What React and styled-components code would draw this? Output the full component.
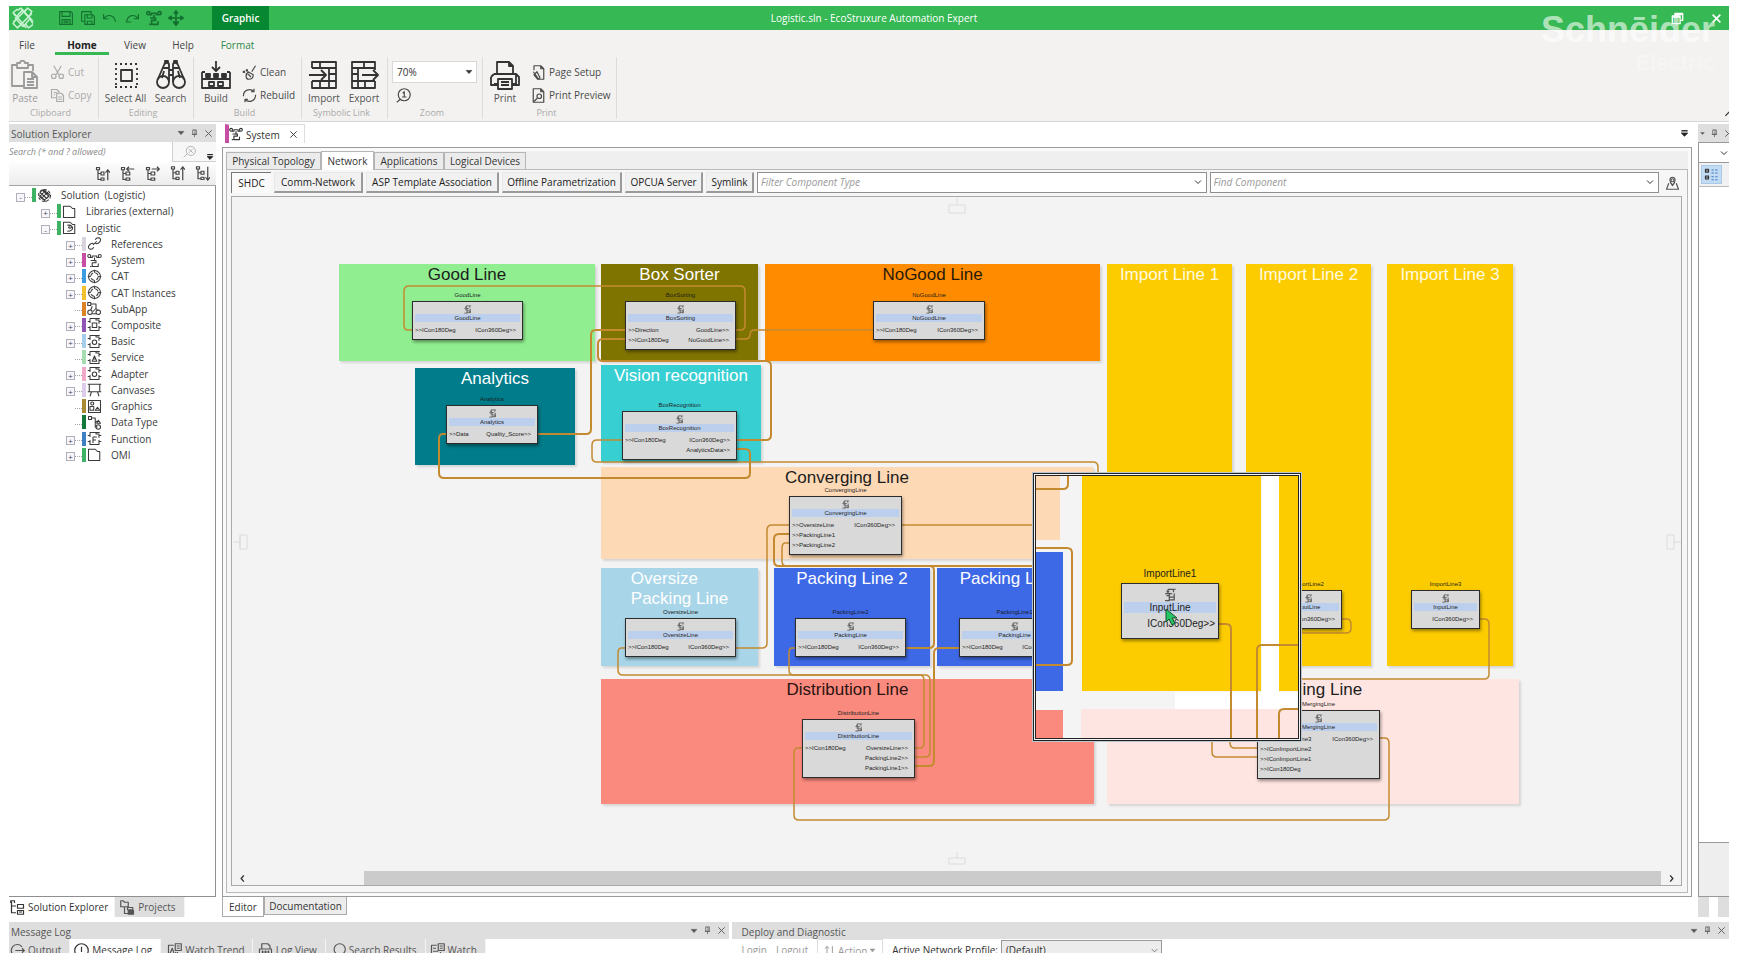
import React from "react";
import styled, { createGlobalStyle, css } from "styled-components";

const GlobalStyle = createGlobalStyle`
  * { box-sizing: border-box; }
  body { margin: 0; background: #fff; font: 10px/14px "Open Sans", "Noto Sans", sans-serif; color: #333; }
  button, input, select { font: inherit; color: inherit; margin: 0; }
  button { border: 0; background: none; padding: 0; white-space: nowrap; }
`;

/* ---------- icons ---------- */

const ICONS = {
  eco: <><path d="M5 3l3-2 8 9 3 5M3 8l-2-3 4-3M11 5l3-4 4 3-2 4M3 12l-2 3 4 4 3-3M12 15l3 4 4-3M8 1l11 12M2 6l11 13M1 14L13 2M6 18L18 6" /><path d="M3 10l7 8M9 3l8 8M3 10l7-8M10 18l7-8" /></>,
  save: <><path d="M2 2h14l2 2v14H2z" /><path d="M5 2v6h10V2M5 18v-6h10v6M7 14h6M7 16h6" /></>,
  saveAll: <><path d="M2 2h12v3M2 2v12h3M6 6h10l2 2v10H6z" /><path d="M9 6v4h6V6M9 18v-4h6v4" /></>,
  undo: <path d="M2 5v6h6M2 11c4-6 13-6 15 4" />,
  redo: <path d="M18 5v6h-6M18 11C14 5 5 5 3 15h6" />,
  net: <><path d="M4 6h3V4h6v2h3M10 6v5M5 10h7v3H7v5h8v-4M6 18H4" /><circle cx="3" cy="4" r="2" /><circle cx="17" cy="4" r="2" /></>,
  move: <><path d="M10 2v14M3 10h14" /><path d="M8 4l2-3 2 3zM4 8l-3 2 3 2zM16 8l3 2-3 2zM7 15h6l-3 4z" fill="currentColor" /></>,
  paste: <><path d="M14 26H2V5h5M18 5h5v6M7 3h3c0-3 5-3 5 0h3v5H7z" /><path d="M14 12h8l5 5v11H14zM22 12v5h5M17 19h7M17 22h7M17 25h7" /></>,
  cut: <><path d="M5 1l7 12M15 1L8 13" /><circle cx="5" cy="15" r="3" /><circle cx="15" cy="15" r="3" /></>,
  copy: <><path d="M8 13H2V2h7l3 3v2M5 6h4M5 9h2" /><path d="M9 7h6l3 3v8H9zM11 12h5M11 15h5" /></>,
  selectAll: <><rect x="10" y="10" width="11" height="11" /><path d="M4 4h24M4 27h24" strokeDasharray="2 3" /><path d="M5 8v18M26 8v18" strokeDasharray="2 3" /></>,
  search: <><circle cx="7" cy="22" r="6" /><circle cx="23" cy="22" r="6" /><path d="M2 19L8 5c1-3 5-3 5 0v17M28 19L22 5c-1-3-5-3-5 0v17M13 10h4M13 15h4M7 8h6M17 8h6M8 11l-2 7M22 11l2 7M9 3V1h3v2M18 3V1h3v2" /></>,
  build: <><path d="M15 1v9M11 7l4 4 4-4M1 12v16h28V12M1 19h28M1 12h3M26 12h3" /><path d="M5 14h4v3H5zM13 14h4v3h-4zM21 14h4v3h-4z" fill="currentColor" /><path d="M8 22h5v4H8zM17 22h5v4h-5z" /></>,
  clean: <><path d="M18 1l-5 8M8 9l7 4c0 4-3 6-6 6-4 0-5-5-1-10zM8 12l4 4" /><path d="M1 9h3M5 7h3M5 12h2" strokeWidth="3" /></>,
  rebuild: <><path d="M2 11a8 8 0 0 1 14-6M18 9a8 8 0 0 1-14 6M16 1v4h-4M4 19v-4h4" /></>,
  import: <><path d="M3 8V2h24v26H3v-7M3 8h24M3 21h24M20 8v20M20 14h7M11 2v6M11 21v7" /><path d="M0 15h16M12 10l5 5-5 5" /></>,
  export: <><path d="M26 10V2H3v26h23v-7M3 8h23M3 21h23M9 8v20M3 14h6M15 2v6M16 21v7" /><path d="M13 15h16M24 10l5 5-5 5" /></>,
  zoomOne: <><circle cx="11" cy="9" r="8" /><path d="M6 15l-5 4M9 7l2-2v7M8 12h6" /></>,
  print: <><path d="M7 14V2h12l4 4v8M19 2v4h4M4 14h22v10h-4M8 24H4M1 17v8h7M4 14l-3 3M26 14l3 3v8h-7" /><path d="M8 19h14v10H8zM11 22h8M11 25h8" /></>,
  pageSetup: <><path d="M4 7V1h9l4 4v14H9M13 1v4h4" /><path d="M3 9l6 8M4 13l4-4 4 8-3 2z" /></>,
  preview: <><path d="M3 1h10l4 4v14H3zM13 1v4h4" /><circle cx="11" cy="11" r="3" /><path d="M8 14l-4 4" /></>,
  pin: <path d="M6 2h8v10H6zM11 2v10M4 12h12M10 12v6" />,
  close: <path d="M3 3l14 14M17 3L3 17" />,
  down: <path d="M3 6h14l-7 8z" fill="currentColor" />,
  overflow: <><path d="M3 4h14" strokeWidth="3" /><path d="M3 9h14l-7 7z" fill="currentColor" /></>,
  chevron: <path d="M4 7l6 6 6-6" />,
  left: <path d="M13 3l-6 7 6 7" />,
  right: <path d="M7 3l6 7-6 7" />,
  clear: <><circle cx="12" cy="9" r="7" /><path d="M6 14l-5 5M9 6l6 6M15 6l-6 6" /></>,
  treeUp: <><path d="M2 2h4v3H2zM4 5v13h4M4 10h4M8 8h4v4H8zM8 16h4v3H8z" /><path d="M17 19V6M14 9l3-4 3 4" /></>,
  treeLeft: <><path d="M2 2h4v3H2zM4 5v13h4M4 10h4M8 8h5v4H8zM8 16h5v3H8z" /><path d="M9 4h10M12 1L9 4l3 3" /></>,
  treeRight: <><path d="M2 2h4v3H2zM4 5v13h4M4 10h4M8 8h5v4H8zM8 16h5v3H8z" /><path d="M9 4h10M16 1l3 3-3 3" /></>,
  treeSort: <><path d="M2 1h4v3H2zM4 4v13h4M4 9h4M8 7h4v4H8zM8 15h4v3H8z" /><path d="M17 19V1M14 5l3-4 3 4" /></>,
  treeDown: <><path d="M2 1h4v3H2zM4 4v13h4M4 9h4M8 7h4v4H8zM8 15h4v3H8z" /><path d="M17 1v18M14 15l3 4 3-4" /></>,
  solution: <><path d="M4 6l3-3 9 8-3 3zM6 14l9-9M4 12l8 6M8 2l9 7M3 9l8 8M12 3L3 12M17 9l-8 8" /><circle cx="10" cy="10" r="8" strokeDasharray="4 2" /></>,
  folder: <path d="M2 18V3h9l3 3h3v12z" />,
  logistic: <><path d="M2 18V3h9l3 3h3v12z" /><path d="M7 7c6-1 8 3 4 4-3 0-3-2 0-2M7 15c5 0 8-2 7-6" /></>,
  link: <><path d="M9 11c-2-3-6 0-7 3-1 4 5 5 7 1" /><path d="M11 9c2 3 6 0 7-3 1-4-5-5-7-1" /><path d="M8 12l5-5" /></>,
  cat: <><circle cx="10" cy="10" r="8" /><circle cx="10" cy="10" r="5" strokeDasharray="5 3" /><path d="M10 1v4M10 15v4M1 10h4M15 10h4" /></>,
  sub: <><path d="M1 2h4v4H1zM5 4h7v6M12 10l-4 4M12 10l3 3M7 7l-2 5" /><circle cx="4" cy="15" r="3" /><circle cx="15" cy="15" r="3" /><path d="M7 17h5" /></>,
  composite: <><path d="M1 6h3M16 6h3M4 8V2h8v2h4v5M4 12v6h12v-6M1 14h3M16 14h3M12 2h5" /><rect x="7" y="8" width="6" height="6" /></>,
  basic: <><path d="M1 6h3M16 6h3M4 8V2h8v2h4v5M4 12v6h12v-6M1 14h3M16 14h3M12 2h5" /><circle cx="10" cy="11" r="3" /></>,
  service: <><path d="M1 6h3M16 6h3M4 8V2h8v2h4v5M4 12v6h12v-6M1 14h3M16 14h3M12 2h5" /><path d="M7 15l3-7 3 7zM8 12h4" /></>,
  canvases: <><path d="M3 3h14v10H3zM1 13h18M6 13l-2 6M14 13l2 6M1 3h18" /></>,
  graphics: <><path d="M2 2h16v16H2z" /><circle cx="7" cy="6" r="2" /><path d="M4 10h5v5H4zM11 15l3-4 3 4z" /></>,
  dataType: <><path d="M2 2h4v4H2zM6 4h5v12h3M14 8l-3 2" /><circle cx="15" cy="16" r="3" /><path d="M13 11l2-4 3 4z" /></>,
  func: <><path d="M1 6h3M16 6h3M4 8V2h8v2h4v5M4 12v6h12v-6M1 14h3M16 14h3M12 2h5" /><path d="M8 16V8h5M8 12h4" /></>,
  marker: <><path d="M10 14c-5-6-4-11 0-11s5 5 0 11z" /><circle cx="10" cy="7" r="2" /><path d="M5 11l-3 8h16l-3-8" /></>,
  grid: <><path d="M10 4h3M15 4h3M10 8h3M15 8h3M10 13h3M10 17h3M15 17h3M15 13h3" stroke="#3a7cc0" /><path d="M2 3h4v4H2zM2 12h4v4H2z" /><path d="M4 4v2M4 13v2" /></>,
  explorer: <path d="M1 4V1h5v3M2 2v15h6M2 8h6M10 6h8v5h-8zM10 14h8v5h-8zM12 16h4" />,
  projects: <><path d="M1 9V1h3l2 2h5v6zM6 9v9h5M10 10h7v3h-7z" /><path d="M11 14h7v5h-7z" fill="currentColor" /></>,
  output: <><path d="M16 5a8 8 0 1 0 0 10" /><path d="M7 10h12M16 7l3 3-3 3" /></>,
  alert: <><circle cx="10" cy="10" r="9" /><path d="M10 5v7M10 14v2" /></>,
  trend: <><path d="M9 3H2v15h12v-6M4 14l3-7 3 9 2-4" /><path d="M11 1h8v9h-8zM13 4h4M13 7h4" /></>,
  log: <><path d="M5 8V1h8l3 3v4M2 8h16v8H2zM5 16v3h10v-3M5 12h10" /><path d="M6 10v4M10 10v4M14 10v4" /></>,
  lens: <><circle cx="11" cy="9" r="8" /><path d="M5 15l-3 4" /></>,
  watch: <><path d="M9 3H2v15h12v-6M4 7h4M4 11h7M4 15h7" /><path d="M11 1h8v9h-8zM13 4h4M13 7h4" /></>,
  action: <path d="M5 18V3M2 6l3-4 3 4M14 2v15M11 14l3 4 3-4" />,
  fb: <path d="M7 2h8v4M5 5h4M3 8h10M7 2v6M5 11h4v7H3M9 11V8M9 13h7v4H9M16 8v10M16 2h2" />,
  restore: <><path d="M6 6V2h12v11h-4M6 4h12" /><path d="M2 6h12v12H2zM2 8h12" /></>,
};

const BIG = new Set(["paste", "selectAll", "search", "build", "import", "export", "print"]);

function Icon({ name, size = 14, weight = 1.6, color }) {
  return (
    <svg width={size} height={size} viewBox={BIG.has(name) ? "0 0 30 30" : "0 0 20 20"} fill="none"
      stroke="currentColor" strokeWidth={weight} color={color} strokeLinejoin="round" aria-hidden="true">
      {ICONS[name]}
    </svg>
  );
}

/* ---------- shell ---------- */

const Shell = styled.div`
  height: 100vh;
  padding: 6px 11px 0 9px;
  display: flex;
  flex-direction: column;
  overflow: hidden;
  position: relative;
`;
const TitleBar = styled.header`
  height: 24px; flex: none;
  background: #36b854;
  display: grid;
  grid-template-columns: 1fr auto 1fr;
  align-items: center;
  color: #fff;
`;
const TitleStart = styled.div`display: flex; align-items: center; height: 24px; padding-left: 3px;`;
const QuickBar = styled.div`
  display: flex; gap: 6px; margin: 0 28px 0 24px; color: #14702f;
  svg { display: block; }
`;
const ContextTab = styled.button`
  background: #078731; color: #fff; width: 57px; height: 24px; font-weight: 600;
`;
const AppTitle = styled.h1`margin: 0 0 0 10px; font-size: 10px; font-weight: 400;`;
const WindowButtons = styled.div`
  display: flex; justify-content: flex-end; gap: 27px; padding-right: 7px;
  svg { display: block; }
`;
const Watermark = styled.div`
  position: absolute; top: 10px; right: 25px;
  font: 700 36px/40px "Liberation Sans", sans-serif;
  color: rgba(255,255,255,.6);
  text-align: right;
  pointer-events: none;
`;
const WatermarkSub = styled.div`font-size: 22px; line-height: 26px; color: rgba(255,255,255,.3);`;

/* ---------- ribbon ---------- */

const Ribbon = styled.section`
  flex: none; height: 92px; background: #f3f2f1; border-bottom: 1px solid #d6d6d6;
  position: relative; overflow: hidden;
`;
const RibbonTabs = styled.nav`display: flex; height: 25px; padding-left: 2px;`;
const RibbonTab = styled.button`
  width: ${p => p.$w}px; height: 25px; padding-top: 8px; line-height: 14px; margin-right: ${p => p.$after || 0}px;
  border-bottom: 3px solid ${p => (p.$on ? "#36b854" : "transparent")};
  font-weight: ${p => (p.$on ? 700 : 400)};
  color: ${p => (p.$accent ? "#2d8a45" : p.$on ? "#222" : "#444")};
`;
const Groups = styled.div`display: flex; margin-top: 2px;`;
const Group = styled.div`
  width: ${p => p.$w}px; height: 62px; border-right: 1px solid #dcdcdc;
  display: flex; flex-direction: column;
`;
const GroupBody = styled.div`
  display: flex; gap: ${p => p.$gap || 0}px; height: 49px; padding-left: ${p => p.$pad || 0}px;
`;
const Caption = styled.div`
  height: 13px; line-height: 13px; text-align: center; font-size: 9px; color: #aaa; padding-right: 6px;
`;
const BigButton = styled.button`
  width: ${p => p.$w}px; padding-top: 3px; display: flex; flex-direction: column; align-items: center;
  line-height: 16px; color: ${p => (p.$off ? "#9a9a9a" : "#333")};
  svg { display: block; flex: none; }
  span { height: 16px; color: ${p => (p.$off ? "#9a9a9a" : "#555")}; }
`;
const Stack = styled.div`display: flex; flex-direction: column; gap: 1px; padding-top: 4px;`;
const SmallButton = styled.button`
  height: 22px; display: flex; align-items: center; gap: 3px; color: ${p => (p.$off ? "#aaa" : "#4a4a4a")};
  padding-left: ${p => p.$pad || 0}px;
`;
const ZoomBox = styled.div`
  position: relative; width: 85px; height: 22px;
  svg { position: absolute; right: 4px; top: 7px; pointer-events: none; }
`;
const ZoomSelect = styled.select`
  appearance: none; width: 85px; height: 22px; border: 1px solid #d8d8d8; background: #fff; padding: 0 4px; border-radius: 0;
`;
const Collapse = styled.button`position: absolute; right: -6px; bottom: 1px; svg { display: block; transform: rotate(180deg); }`;

/* ---------- docks ---------- */

const Main = styled.main`
  flex: 1; min-height: 0; display: flex; padding: 2px 0 5px; gap: 6px;
`;
const Dock = styled.aside`
  width: ${p => p.$w}px; flex: none; display: flex; flex-direction: column;
`;
const DockHeader = styled.div`
  height: ${p => p.$h || 18}px; flex: none; background: #dedede; display: flex; align-items: center; padding: 2px 3px 0 ${p => p.$pad ?? 2}px;
  color: #555; overflow: hidden;
  h2 { margin: 0; font-size: 10px; font-weight: 400; flex: 1; }
`;
const DockTools = styled.div`display: flex; gap: 5px; align-items: center; color: #555; margin-top: -2px; svg { display: block; }`;
const SearchRow = styled.div`
  height: 20px; display: flex; background: #f7f7f7; border-bottom: 1px solid #d0d0d0; align-items: center;
  svg { display: block; }
`;
const SearchInput = styled.input`
  width: 164px; height: 20px; border: 0; border-right: 1px solid #d0d0d0; padding: 0; font-style: italic; font-size: 9px; background: #fff;
  &::placeholder { color: #888; opacity: 1; }
`;
const SearchClear = styled.button`width: 33px; display: flex; justify-content: center; color: #aaa;`;
const MoreButton = styled.button`align-self: flex-end; color: #222;`;
const TreeTools = styled.div`
  height: 24px; display: flex; align-items: center; justify-content: flex-end; gap: 10px; padding-right: 6px;
  background: linear-gradient(#fdfdfd, #ececec); border-bottom: 1px solid #a5a5a5; color: #444;
  svg { display: block; }
`;
const TreeBox = styled.div`flex: 1; min-height: 0; border-right: 1px solid #8f8f8f; border-bottom: 1px solid #8f8f8f;`;
const Tree = styled.ul`
  list-style: none; margin: 0; padding: 1px 0 0 5px; height: 277px; display: flex; flex-direction: column;
`;
const TreeRow = styled.li`
  flex: 1; display: flex; align-items: center; padding-left: ${p => p.$level * 25}px; color: #3a3a3a; white-space: pre;
  svg { display: block; }
`;
const Twist = styled.button`
  width: 9px; height: 9px; margin: 4px 0 0 2px; border: 1px solid #b0b0bd; background: #f6f6fb;
  font-size: 8px; line-height: 6px; color: #445; visibility: ${p => (p.$none ? "hidden" : "visible")};
`;
const Twig = styled.span`width: 7px; height: 1px; margin-top: 4px; border-top: 1px dotted #a5a5a5;`;
const Tint = styled.span`width: 4px; height: 14px; background: ${p => p.$c}; margin-right: 1px;`;
const TreeLabel = styled.span`margin-left: 9px; line-height: 14px;`;
const DockTabs = styled.div`display: flex; height: 20px; flex: none;`;
const DockTab = styled.button`
  height: ${p => p.$h || 20}px; display: flex; align-items: center; gap: 3px; padding: 0 ${p => p.$pad || 6}px 0 ${p => p.$lead ?? 1}px;
  background: ${p => (p.$on ? "#fff" : "#dedede")}; color: ${p => (p.$on ? "#333" : "#555")};
  border-right: 1px solid #f4f4f4;
  svg { display: block; flex: none; }
`;

/* ---------- document ---------- */

const Doc = styled.section`flex: 1; min-width: 0; display: flex; flex-direction: column;`;
const DocTabs = styled.div`display: flex; justify-content: space-between; height: 19px; align-items: center; padding: 0 3px; margin-bottom: 4px; svg { display: block; }`;
const DocTab = styled.div`
  display: flex; align-items: center; height: 19px; width: 80px; border: 1px solid #ddd; border-bottom: 0; border-left: 4px solid #c64fa3;
  span { margin: 2px 9px 0 3px; }
`;
const DocFrame = styled.div`
  flex: 1; min-height: 0; border: 1px solid #9b9b9b; background: #fafafa; padding: 3px 3px 3px; display: flex; flex-direction: column;
`;
const PageTabs = styled.div`display: flex; height: 18px; align-items: flex-end; background: #efefef; flex: none;`;
const PageTab = styled.button`
  width: ${p => p.$w}px; height: ${p => (p.$on ? 19 : 17)}px; border: 1px solid #b5b5b5;
  border-bottom: 0; background: ${p => (p.$on ? "#fff" : "#ebebeb")}; margin-bottom: ${p => (p.$on ? -1 : 0)}px; z-index: 1;
`;
const Page = styled.div`
  flex: 1; min-height: 0; border: 1px solid #b9b9b9; padding: 1px 5px 6px 4px; display: flex; flex-direction: column; gap: 3px; background: #f6f6f6;
`;
const ToolRow = styled.div`display: flex; height: 22px; gap: 3px; align-items: center; svg { display: block; }`;
const ToolButton = styled.button`
  width: ${p => p.$w}px; height: 21px; flex: none; color: #222;
  ${p => p.$on
    ? css`border-top: 1px solid #777; border-left: 1px solid #777; background: #fafafa;`
    : css`border: 1px solid #e8e8e8; border-right: 2px solid #9a9a9a; border-bottom: 2px solid #9a9a9a; background: #f1f1f1;`}
`;
const Combo = styled.div`
  flex: 1; height: 21px; display: flex; align-items: center; border: 1px solid #8f8f8f; background: #fff; padding-right: 3px;
`;
const ComboInput = styled.input`
  flex: 1; min-width: 0; border: 0; padding: 0 3px; height: 18px; background: none; font-style: italic; outline: 0;
  &::placeholder { color: #999; opacity: 1; }
`;
const MarkerButton = styled.button`width: 20px; display: flex; justify-content: center; color: #555;`;
const Canvas = styled.div`
  flex: 1; min-height: 0; border: 1px solid #a9a9a9; background: #f3f3f3; display: flex; flex-direction: column;
`;
const View = styled.div`flex: 1; min-height: 0; position: relative; overflow: hidden;`;
const Scroller = styled.div`display: flex; height: 14px; align-items: center; flex: none; svg { display: block; }`;
const ScrollArrow = styled.button`width: 20px; display: flex; justify-content: center; color: #333;`;
const Track = styled.div`flex: 1; height: 14px; display: flex;`;
const Thumb = styled.div`flex: 1; margin-left: 112px; background: #cbcbcb;`;
const DocFooter = styled.div`display: flex; height: 20px; flex: none;`;
const FooterTab = styled.button`
  width: ${p => p.$w}px; height: ${p => (p.$on ? 20 : 18)}px; border: 1px solid #aaa; border-top: 0; background: ${p => (p.$on ? "#fff" : "#ececec")};
`;

/* ---------- diagram ---------- */

const Zone = styled.section`
  position: absolute; left: ${p => p.$x}px; top: ${p => p.$y}px; width: ${p => p.$w}px; height: ${p => p.$h}px;
  background: ${p => p.$bg}; color: ${p => p.$fg};
  display: flex; justify-content: center; padding-top: 1px;
  box-shadow: 2px 2px 2px rgba(0,0,0,.12);
  h3 { margin: 0; font: 400 17px/20px "Liberation Sans", Arial, sans-serif; white-space: pre-line; }
`;
const Wires = styled.svg`position: absolute; left: 0; top: 0; width: 100%; height: 100%; overflow: visible; pointer-events: none;`;
const Block = styled.div`
  position: absolute; left: ${p => p.$x}px; top: ${p => p.$y}px; width: ${p => p.$w}px;
  font: ${p => (p.$large ? "10px/14px" : "6px/10px")} "Liberation Sans", Arial, sans-serif; color: #1c1c1c; text-align: center;
`;
const BlockName = styled.div`height: ${p => (p.$large ? 16 : 11)}px; white-space: nowrap;`;
const BlockBody = styled.div`
  border: 1px solid #2c2c2c; background: #d9d9d9; padding: ${p => (p.$large ? "4px 2px 7px" : "3px 2px 4px")};
  box-shadow: 1px 2px 3px rgba(0,0,0,.4);
  svg { display: block; margin: 0 auto; }
`;
const BlockType = styled.div`background: #bccfec; height: ${p => (p.$large ? 11 : 8)}px; line-height: ${p => (p.$large ? 11 : 8)}px; margin-bottom: ${p => (p.$large ? 4 : 3)}px;`;
const Ports = styled.div`display: flex; justify-content: space-between;`;
const PortList = styled.div`display: flex; flex-direction: column; text-align: ${p => (p.$end ? "right" : "left")}; padding-right: ${p => (p.$end ? p.$pad : 0)}px;`;

const ORIGIN = { x: 232, y: 197 };
const WIRE = "#c48a30";

const zones = [
  [339, 264, 256, 97, "#90ee90", "#1c1c1c", "Good Line"],
  [601, 264, 157, 97, "#807400", "#fff", "Box Sorter"],
  [765, 264, 335, 97, "#ff8c00", "#2a1a08", "NoGood Line"],
  [1107, 264, 125, 402, "#fccc00", "#fffbe0", "Import Line 1"],
  [1246, 264, 125, 402, "#fccc00", "#fffbe0", "Import Line 2"],
  [1387, 264, 126, 402, "#fccc00", "#fffbe0", "Import Line 3"],
  [415, 368, 160, 97, "#007c8a", "#fff", "Analytics"],
  [601, 365, 160, 97, "#38cfd2", "#fff", "Vision recognition"],
  [601, 467, 492, 92, "#fed9b6", "#1c1c1c", "Converging Line"],
  [601, 568, 157, 98, "#a8d5e8", "#fff", "Oversize\nPacking Line"],
  [774, 568, 156, 98, "#3d68e6", "#fff", "Packing Line 2"],
  [937, 568, 157, 98, "#3d68e6", "#fff", "Packing Line 1"],
  [601, 679, 493, 125, "#fb8a7e", "#2a1210", "Distribution Line"],
  [1107, 679, 412, 125, "#fee5e1", "#1c1c1c", "Merging Line"],
];

const blocks = [
  [412, 301, 111, "GoodLine", "GoodLine", [">>ICon180Deg"], ["ICon360Deg>>"]],
  [625, 301, 111, "BoxSorting", "BoxSorting", [">>Direction", ">>ICon180Deg"], ["GoodLine>>", "NoGoodLine>>"]],
  [873, 301, 112, "NoGoodLine", "NoGoodLine", [">>ICon180Deg"], ["ICon360Deg>>"]],
  [446, 405, 92, "Analytics", "Analytics", [">>Data"], ["Quality_Score>>"]],
  [622, 411, 115, "BoxRecognition", "BoxRecognition", [">>ICon180Deg"], ["ICon360Deg>>", "AnalyticsData>>"]],
  [789, 496, 113, "ConvergingLine", "ConvergingLine", [">>OversizeLine", ">>PackingLine1", ">>PackingLine2"], ["ICon360Deg>>"]],
  [625, 618, 111, "OversizeLine", "OversizeLine", [">>ICon180Deg"], ["ICon360Deg>>"]],
  [795, 618, 111, "PackingLine2", "PackingLine", [">>ICon180Deg"], ["ICon360Deg>>"]],
  [959, 618, 111, "PackingLine1", "PackingLine", [">>ICon180Deg"], ["ICon360Deg>>"]],
  [802, 719, 113, "DistributionLine", "DistributionLine", [">>ICon180Deg"], ["OversizeLine>>", "PackingLine2>>", "PackingLine1>>"]],
  [1274, 590, 68, "ImportLine2", "InputLine", [], ["ICon360Deg>>"]],
  [1411, 590, 69, "ImportLine3", "InputLine", [], ["ICon360Deg>>"]],
  [1257, 710, 123, "MergingLine", "MergingLine", [">>IConImportLine3", ">>IConImportLine2", ">>IConImportLine1", ">>ICon180Deg"], ["ICon360Deg>>"]],
];

const wires = [
  [1.5, [412, 330], [404, 330], [404, 286], [745, 286], [745, 330], [736, 330]],
  [2, [538, 434], [591, 434], [591, 330], [625, 330]],
  [2, [625, 339], [598, 339], [598, 361], [771, 361], [771, 440], [737, 440]],
  [1.5, [736, 339], [750, 339], [750, 330], [873, 330]],
  [2, [446, 434], [439, 434], [439, 478], [750, 478], [750, 449], [737, 449]],
  [1.5, [622, 440], [592, 440], [592, 462], [1098, 462], [1098, 480]],
  [1.5, [736, 648], [767, 648], [767, 525], [789, 525]],
  [2, [789, 534], [774, 534], [774, 566], [1040, 566]],
  [1.5, [789, 543], [782, 543], [782, 566], [800, 566]],
  [2, [906, 648], [934, 648], [934, 566], [925, 566]],
  [2, [915, 766], [934, 766], [934, 648], [959, 648]],
  [1.5, [902, 525], [1040, 525]],
  [1.5, [915, 748], [924, 748], [924, 675], [618, 675], [618, 648], [625, 648]],
  [1.5, [915, 757], [930, 757], [930, 675], [789, 675], [789, 648], [795, 648]],
  [1.5, [802, 748], [794, 748], [794, 820], [1389, 820], [1389, 738], [1380, 738]],
  [1.5, [1342, 619], [1351, 619], [1351, 633], [1290, 633]],
  [1.5, [1480, 619], [1489, 619], [1489, 679], [1290, 679]],
  [1.5, [1212, 730], [1212, 757], [1257, 757]],
  [1.5, [1230, 730], [1230, 748], [1257, 748]],
];

function wirePath(points, ox, oy) {
  const p = points.map(([x, y]) => [x - ox, y - oy]);
  let d = `M${p[0]}`;
  for (let i = 1; i < p.length - 1; i++) {
    const step = (a, b) => {
      const dx = b[0] - a[0], dy = b[1] - a[1];
      const len = Math.abs(dx) + Math.abs(dy);
      const r = Math.min(5, len / 2);
      return [a[0] + (dx / len) * r, a[1] + (dy / len) * r];
    };
    d += `L${step(p[i], p[i - 1])}Q${p[i]} ${step(p[i], p[i + 1])}`;
  }
  return d + `L${p[p.length - 1]}`;
}

const Lens = styled.div`
  position: absolute; left: 801px; top: 276px; width: 268px; height: 268px;
  border: 3px double #222; background: #f4f4f4; overflow: hidden; box-shadow: 0 0 0 1px #b9c6cf;
`;
const Patch = styled.div`
  position: absolute; left: ${p => p.$x}px; top: ${p => p.$y}px; width: ${p => p.$w}px; height: ${p => p.$h}px; background: ${p => p.$bg};
`;
const Cursor = styled.svg`position: absolute; left: 129px; top: 132px;`;

const patches = [
  [1036, 476, 24, 64, "#fed9b6"],
  [1036, 552, 27, 139, "#3d68e6"],
  [1036, 710, 27, 30, "#fb8a7e"],
  [1262, 476, 17, 220, "#fff"],
  [1175, 692, 125, 17, "#fff"],
  [1082, 476, 179, 215, "#fccc00"],
  [1279, 476, 20, 215, "#fccc00"],
  [1081, 709, 218, 30, "#fee5e1"],
];
const lensWires = [
  [2, [1030, 489], [1068, 489], [1068, 470]],
  [2, [1030, 548], [1072, 548], [1072, 665], [1030, 665]],
  [2, [1218, 624], [1231, 624], [1231, 745]],
  [2, [1305, 645], [1257, 645], [1257, 745]],
  [2, [1305, 709], [1279, 709], [1279, 745]],
];

function FunctionBlock({ x, y, w, name, type, inputs, outputs, large }) {
  return (
    <Block $x={x} $y={y - (large ? 16 : 11)} $w={w} $large={large}>
      <BlockName $large={large}>{name}</BlockName>
      <BlockBody $large={large}>
        <Icon name="fb" size={large ? 14 : 9} weight={1.8} color="#555" />
        <BlockType $large={large}>{type}</BlockType>
        <Ports>
          <PortList>{inputs.map(t => <span key={t}>{t}</span>)}</PortList>
          <PortList $end $pad={large ? 1 : 4}>{outputs.map(t => <span key={t}>{t}</span>)}</PortList>
        </Ports>
      </BlockBody>
    </Block>
  );
}

function WireLayer({ list, x, y }) {
  return (
    <Wires aria-hidden="true">
      {list.map(([width, ...pts], i) => (
        <path key={i} d={wirePath(pts, x, y)} fill="none" stroke={WIRE} strokeWidth={width} />
      ))}
    </Wires>
  );
}

function Diagram() {
  return (
    <View>
      <Wires aria-hidden="true" stroke="#dcdcdc" fill="none">
        <path d="M717 8h16v8h-16zM725 1v7M717 667h16v-6h-16zM725 661v-6M8 338v14M8 345h-6M15 338v14h-7v-14zM1435 338v14h7v-14zM1442 345h8" />
      </Wires>
      {zones.map(([x, y, w, h, bg, fg, t]) => (
        <Zone key={t} $x={x - ORIGIN.x} $y={y - ORIGIN.y} $w={w} $h={h} $bg={bg} $fg={fg}><h3>{t}</h3></Zone>
      ))}
      <WireLayer list={wires} x={ORIGIN.x} y={ORIGIN.y} />
      {blocks.map(([x, y, w, name, type, inputs, outputs]) => (
        <FunctionBlock key={name} x={x - ORIGIN.x} y={y - ORIGIN.y} w={w} name={name} type={type} inputs={inputs} outputs={outputs} />
      ))}
      <Lens>
        {patches.map(([x, y, w, h, bg]) => <Patch key={`${x}-${y}`} $x={x - 1036} $y={y - 476} $w={w} $h={h} $bg={bg} />)}
        <WireLayer list={lensWires} x={1036} y={476} />
        <FunctionBlock large x={85} y={107} w={98} name="ImportLine1" type="InputLine" inputs={[]} outputs={["ICon360Deg>>"]} />
        <Cursor width="13" height="18" viewBox="0 0 13 18"><path d="M1 1v13l3-3 3 6 3-2-3-5h5z" fill="#27c566" stroke="#14532d" /></Cursor>
      </Lens>
    </View>
  );
}

/* ---------- tree data ---------- */

const tree = [
  [0, "-", "#3fb265", "solution", "Solution  (Logistic)"],
  [1, "+", "#3fb265", "folder", "Libraries (external)"],
  [1, "-", "#3fb265", "logistic", "Logistic"],
  [2, "+", "#d9d3de", "link", "References"],
  [2, "+", "#c64fa3", "net", "System"],
  [2, "+", "#3d9be0", "cat", "CAT"],
  [2, "+", "#f2c12e", "cat", "CAT Instances"],
  [2, "", "#d98324", "sub", "SubApp"],
  [2, "+", "#8e55b5", "composite", "Composite"],
  [2, "+", "#a6cdea", "basic", "Basic"],
  [2, "", "#a5dcb2", "service", "Service"],
  [2, "+", "#f0a9c6", "basic", "Adapter"],
  [2, "+", "#dccbea", "canvases", "Canvases"],
  [2, "", "#a98a35", "graphics", "Graphics"],
  [2, "", "#137a3b", "dataType", "Data Type"],
  [2, "+", "#3f7fc4", "func", "Function"],
  [2, "+", "#3fb265", "folder", "OMI"],
];

/* ---------- bottom ---------- */

const Bottom = styled.footer`flex: none; height: 31px; display: flex; gap: 3px; overflow: hidden;`;
const BottomPane = styled.section`flex: ${p => p.$grow} 1 0; min-width: 0;`;
const DeployRow = styled.div`
  display: flex; align-items: center; height: 22px; padding-left: 10px; color: #999; gap: 9px;
  label { color: #333; margin-right: -6px; }
`;
const ActionButton = styled.button`display: flex; align-items: center; justify-content: center; gap: 2px; width: 66px; height: 22px; border: 1px solid #ddd; border-bottom: 0; svg { display: block; }`;
const ProfileSelect = styled.select`appearance: none; width: 161px; height: 20px; border: 1px solid #999; background: #ececec; padding: 0 4px; color: #333; border-radius: 0; display: block;`;
const ProfileBox = styled.div`position: relative; svg { position: absolute; right: 3px; top: 6px; color: #555; pointer-events: none; }`;

const PropCombo = styled.button`height: 21px; border: 1px solid #999; border-right: 0; background: #fff; display: flex; align-items: center; justify-content: flex-end;`;
const PropTools = styled.div`height: 24px; padding: 2px; background: #f1f1f1; border-left: 1px solid #999; border-bottom: 1px solid #bbb;`;
const PropButton = styled.button`width: 21px; height: 19px; background: #c3daf3; border: 1px solid #a9c8ea; display: flex; align-items: center; justify-content: center;`;
const PropBody = styled.div`flex: 1; border-left: 1px solid #999;`;
const PropHelp = styled.div`height: 55px; border: 1px solid #999; border-right: 0; background: #eee;`;
const PropTabs = styled.div`height: 20px; display: flex; background: #dedede; justify-content: center; span { width: 9px; background: #fff; }`;

function HeaderTools() {
  return (
    <DockTools>
      <Icon name="down" size={8} /><Icon name="pin" size={9} /><Icon name="close" size={9} weight={2} />
    </DockTools>
  );
}

function Small({ icon, off, pad, label, children }) {
  return <SmallButton $off={off} $pad={pad} aria-label={label}><Icon name={icon} size={15} weight={1.6} />{children}</SmallButton>;
}

function Big({ icon, w, off, children }) {
  return <BigButton $w={w} $off={off}><Icon name={icon} size={30} weight={1.8} /><span>{children}</span></BigButton>;
}

export default function App() {
  return (
    <>
      <GlobalStyle />
      <Shell>
        <TitleBar>
          <TitleStart>
            <Icon name="eco" size={22} weight={1.4} color="#c9f2d2" />
            <QuickBar>
              {["save", "saveAll", "undo", "redo", "net", "move"].map(n => <button key={n} aria-label={n}><Icon name={n} size={16} weight={n === "net" || n === "move" ? 2 : 1.4} /></button>)}
            </QuickBar>
            <ContextTab>Graphic</ContextTab>
          </TitleStart>
          <AppTitle>Logistic.sln - EcoStruxure Automation Expert</AppTitle>
          <WindowButtons>
            <button aria-label="Restore"><Icon name="restore" size={13} weight={2} /></button>
            <button aria-label="Close"><Icon name="close" size={11} weight={3} /></button>
          </WindowButtons>
        </TitleBar>

        <Ribbon>
          <RibbonTabs>
            <RibbonTab $w={32} $after={12}>File</RibbonTab>
            <RibbonTab $w={54} $on>Home</RibbonTab>
            <RibbonTab $w={52}>View</RibbonTab>
            <RibbonTab $w={44}>Help</RibbonTab>
            <RibbonTab $w={65} $accent>Format</RibbonTab>
          </RibbonTabs>
          <Groups>
            <Group $w={90}>
              <GroupBody $gap={9}>
                <Big icon="paste" w={32} off>Paste</Big>
                <Stack><Small icon="cut" off>Cut</Small><Small icon="copy" off>Copy</Small></Stack>
              </GroupBody>
              <Caption>Clipboard</Caption>
            </Group>
            <Group $w={95}>
              <GroupBody $gap={3} $pad={4}>
                <Big icon="selectAll" w={45}>Select All</Big>
                <Big icon="search" w={39}>Search</Big>
              </GroupBody>
              <Caption>Editing</Caption>
            </Group>
            <Group $w={108}>
              <GroupBody $gap={8} $pad={4}>
                <Big icon="build" w={36}>Build</Big>
                <Stack><Small icon="clean">Clean</Small><Small icon="rebuild">Rebuild</Small></Stack>
              </GroupBody>
              <Caption>Build</Caption>
            </Group>
            <Group $w={86}>
              <GroupBody $pad={2}>
                <Big icon="import" w={40}>Import</Big>
                <Big icon="export" w={40}>Export</Big>
              </GroupBody>
              <Caption>Symbolic Link</Caption>
            </Group>
            <Group $w={95}>
              <GroupBody $pad={4}>
                <Stack>
                  <ZoomBox>
                    <ZoomSelect aria-label="Zoom" defaultValue="70"><option value="70">70%</option></ZoomSelect>
                    <Icon name="down" size={8} />
                  </ZoomBox>
                  <Small icon="zoomOne" pad={4} label="Actual size" />
                </Stack>
              </GroupBody>
              <Caption>Zoom</Caption>
            </Group>
            <Group $w={134}>
              <GroupBody $gap={8} $pad={4}>
                <Big icon="print" w={36}>Print</Big>
                <Stack><Small icon="pageSetup">Page Setup</Small><Small icon="preview">Print Preview</Small></Stack>
              </GroupBody>
              <Caption>Print</Caption>
            </Group>
          </Groups>
          <Collapse aria-label="Collapse ribbon"><Icon name="chevron" size={12} weight={2} /></Collapse>
        </Ribbon>

        <Main>
          <Dock $w={207}>
            <DockHeader><h2>Solution Explorer</h2><HeaderTools /></DockHeader>
            <SearchRow>
              <SearchInput aria-label="Search solution" placeholder="Search (* and ? allowed)" />
              <SearchClear aria-label="Clear search"><Icon name="clear" size={13} weight={1.3} /></SearchClear>
              <MoreButton aria-label="More"><Icon name="overflow" size={8} weight={2} /></MoreButton>
            </SearchRow>
            <TreeTools>
              {["treeUp", "treeLeft", "treeRight", "treeSort", "treeDown"].map(n => <button key={n} aria-label={n}><Icon name={n} size={15} /></button>)}
            </TreeTools>
            <TreeBox>
              <Tree>
                {tree.map(([level, sign, tint, icon, label]) => (
                  <TreeRow key={label} $level={level}>
                    <Twist $none={!sign} aria-label={sign === "+" ? "Expand" : "Collapse"}>{sign}</Twist>
                    <Twig /><Tint $c={tint} /><Icon name={icon} size={15} weight={1.4} /><TreeLabel>{label}</TreeLabel>
                  </TreeRow>
                ))}
              </Tree>
            </TreeBox>
            <DockTabs>
              <DockTab $on><Icon name="explorer" size={15} />Solution Explorer</DockTab>
              <DockTab $lead={5} $pad={8}><Icon name="projects" size={15} />Projects</DockTab>
            </DockTabs>
          </Dock>

          <Doc>
            <DocTabs>
              <DocTab><Icon name="net" size={14} /><span>System</span><Icon name="close" size={9} weight={2} /></DocTab>
              <button aria-label="Open documents"><Icon name="overflow" size={9} weight={2} color="#222" /></button>
            </DocTabs>
            <DocFrame>
              <PageTabs>
                <PageTab $w={95}>Physical Topology</PageTab>
                <PageTab $w={53} $on>Network</PageTab>
                <PageTab $w={70}>Applications</PageTab>
                <PageTab $w={82}>Logical Devices</PageTab>
              </PageTabs>
              <Page>
                <ToolRow>
                  <ToolButton $w={40} $on>SHDC</ToolButton>
                  <ToolButton $w={89}>Comm-Network</ToolButton>
                  <ToolButton $w={133}>ASP Template Association</ToolButton>
                  <ToolButton $w={120}>Offline Parametrization</ToolButton>
                  <ToolButton $w={78}>OPCUA Server</ToolButton>
                  <ToolButton $w={48}>Symlink</ToolButton>
                  <Combo><ComboInput aria-label="Filter Component Type" placeholder="Filter Component Type" /><Icon name="chevron" size={10} weight={2} /></Combo>
                  <Combo><ComboInput aria-label="Find Component" placeholder="Find Component" /><Icon name="chevron" size={10} weight={2} /></Combo>
                  <MarkerButton aria-label="Locate"><Icon name="marker" size={15} /></MarkerButton>
                </ToolRow>
                <Canvas>
                  <Diagram />
                  <Scroller>
                    <ScrollArrow aria-label="Scroll left"><Icon name="left" size={9} weight={3} /></ScrollArrow>
                    <Track><Thumb /></Track>
                    <ScrollArrow aria-label="Scroll right"><Icon name="right" size={9} weight={3} /></ScrollArrow>
                  </Scroller>
                </Canvas>
              </Page>
            </DocFrame>
            <DocFooter>
              <FooterTab $w={42} $on>Editor</FooterTab>
              <FooterTab $w={83}>Documentation</FooterTab>
            </DocFooter>
          </Doc>

          <Dock $w={31}>
            <DockHeader $pad={2}><DockTools><Icon name="down" size={5} /><Icon name="pin" size={9} /><Icon name="close" size={9} weight={2} /></DockTools></DockHeader>
            <PropCombo aria-label="Choose object"><Icon name="chevron" size={10} weight={2} /></PropCombo>
            <PropTools><PropButton aria-label="Categorized"><Icon name="grid" size={15} /></PropButton></PropTools>
            <PropBody />
            <PropHelp />
            <PropTabs><span /></PropTabs>
          </Dock>
        </Main>

        <Bottom>
          <BottomPane $grow={720}>
            <DockHeader $h={17}><h2>Message Log</h2><HeaderTools /></DockHeader>
            <DockTabs>
              <DockTab $h={22} $pad={8}><Icon name="output" size={15} />Output</DockTab>
              <DockTab $h={22} $on $lead={4} $pad={8}><Icon name="alert" size={15} />Message Log</DockTab>
              <DockTab $h={22} $lead={6} $pad={7}><Icon name="trend" size={15} />Watch Trend</DockTab>
              <DockTab $h={22} $lead={5} $pad={8}><Icon name="log" size={15} />Log View</DockTab>
              <DockTab $h={22} $lead={6} $pad={8}><Icon name="lens" size={14} />Search Results</DockTab>
              <DockTab $h={22} $lead={4} $pad={8}><Icon name="watch" size={15} />Watch</DockTab>
            </DockTabs>
          </BottomPane>
          <BottomPane $grow={998}>
            <DockHeader $h={17} $pad={10}><h2>Deploy and Diagnostic</h2><HeaderTools /></DockHeader>
            <DeployRow>
              <button>Login</button>
              <button>Logout</button>
              <ActionButton><Icon name="action" size={12} />Action<Icon name="down" size={7} /></ActionButton>
              <label htmlFor="profile">Active Network Profile:</label>
              <ProfileBox>
                <ProfileSelect id="profile"><option>(Default)</option></ProfileSelect>
                <Icon name="chevron" size={9} />
              </ProfileBox>
            </DeployRow>
          </BottomPane>
        </Bottom>
        <Watermark aria-hidden="true">Schnēider<WatermarkSub>Electric</WatermarkSub></Watermark>
      </Shell>
    </>
  );
}
